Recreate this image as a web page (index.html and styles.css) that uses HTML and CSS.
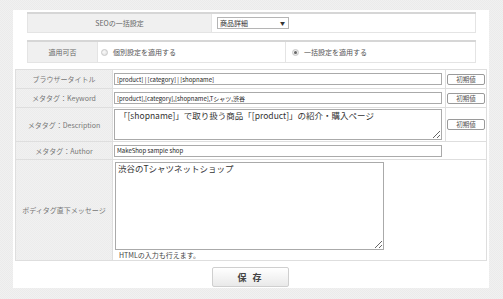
FILE: index.html
```html
<!DOCTYPE html>
<html lang="ja">
<head>
  <meta charset="UTF-8" />
  <title>SEO設定</title>
  <link rel="stylesheet" href="styles.css">
</head>
<body>
  <div class="page">
    <div class="panel">
      <div class="box box-seo">
        <div class="box-label">SEOの一括設定</div>
        <div class="box-cell">
          <span class="select">商品詳細</span>
        </div>
      </div>

      <div class="box box-apply">
        <div class="box-label">適用可否</div>
        <div class="box-cell">
          <span class="radio"></span>個別設定を適用する
        </div>
        <div class="box-cell box-cell-last">
          <span class="radio radio-on"></span>一括設定を適用する
        </div>
      </div>

      <div class="form">
        <div class="label">ブラウザータイトル</div>
        <div class="value"><input class="text" type="text" value="[product] | [category] | [shopname]"></div>
        <div class="reset"><button class="btn-reset">初期値</button></div>

        <div class="label">メタタグ：Keyword</div>
        <div class="value"><input class="text" type="text" value="[product],[category],[shopname],Tシャツ,渋谷"></div>
        <div class="reset"><button class="btn-reset">初期値</button></div>

        <div class="label">メタタグ：Description</div>
        <div class="value"><textarea class="area area-desc">「[shopname]」で取り扱う商品「[product]」の紹介・購入ページ</textarea></div>
        <div class="reset"><button class="btn-reset">初期値</button></div>

        <div class="label">メタタグ：Author</div>
        <div class="value value-wide"><input class="text" type="text" value="MakeShop sample shop"></div>

        <div class="label">ボディタグ直下メッセージ</div>
        <div class="value value-wide value-body">
          <textarea class="area area-body">渋谷のTシャツネットショップ</textarea>
          <p class="note">HTMLの入力も行えます。</p>
        </div>
      </div>

      <div class="actions">
        <button class="btn-save">保 存</button>
      </div>
    </div>
  </div>
</body>
</html>
```

FILE: styles.css
```css
body {
  margin: 0;
  background-color: #eeeeee;
  background-image: repeating-conic-gradient(#f1f1f1 0 25%, #ebebeb 0 50%);
  background-size: 2px 2px;
  font-family: "Noto Sans CJK JP", sans-serif;
  font-size: 7px;
  color: #555;
}
.page {
  padding: 10px 14px 11px 13px;
}
.panel {
  background: #fff;
  width: 476px;
  height: 278px;
  box-sizing: border-box;
  padding: 2px 2px 0;
}

/* top boxes */
.box {
  display: grid;
  margin: 0 11px 0 12px;
  background: #e4e4e4;
  border-top: 2px solid #d6d6d6;
  padding: 0 1px 1px;
  gap: 1px;
}
.box-seo {
  grid-template-columns: 183px 1fr;
  height: 21px;
  box-sizing: border-box;
}
.box-apply {
  grid-template-columns: 69px 187px 1fr;
  height: 23px;
  box-sizing: border-box;
  margin-top: 7px;
}
.box-label {
  display: flex;
  align-items: center;
  justify-content: center;
  background: #f0f0f0;
  color: #666;
}
.box-cell {
  display: flex;
  align-items: center;
  background: #fff;
  padding-left: 3px;
  color: #555;
}
.box-seo .box-cell {
  padding-left: 5px;
}
.box-cell-last {
  padding-left: 6px;
}
.select {
  position: relative;
  display: block;
  width: 72px;
  height: 12px;
  box-sizing: border-box;
  border: 1px solid #b5b5b5;
  padding-left: 2px;
  line-height: 10px;
  color: #333;
}
.select::after {
  content: "▼";
  position: absolute;
  right: 3px;
  top: 0;
  font-size: 5px;
  line-height: 10px;
  color: #333;
}
.radio {
  display: inline-block;
  width: 7px;
  height: 7px;
  border-radius: 50%;
  border: 1px solid #c8c8c8;
  background: radial-gradient(circle at 40% 40%, #fafafa, #dcdcdc);
  margin-right: 5px;
  box-sizing: border-box;
  position: relative;
}
.radio-on::after {
  content: "";
  position: absolute;
  left: 1px;
  top: 1px;
  width: 3px;
  height: 3px;
  border-radius: 50%;
  background: #666;
}

/* main form */
.form {
  display: grid;
  grid-template-columns: 96px 332px 40px;
  grid-template-rows: 18px 18px 33px 17px 100px;
  gap: 1px;
  padding: 1px;
  background: #dedede;
  margin-top: 6px;
}
.label {
  display: flex;
  align-items: center;
  justify-content: center;
  background-color: #efefef;
  background-image: repeating-conic-gradient(#f1f1f1 0 25%, #ececec 0 50%);
  background-size: 2px 2px;
  color: #777;
}
.value {
  display: flex;
  align-items: center;
  background: #fff;
  padding-left: 1px;
}
.value-wide {
  grid-column: span 2;
}
.value-body {
  flex-direction: column;
  align-items: flex-start;
  justify-content: flex-start;
  padding-left: 2px;
}
.reset {
  display: flex;
  align-items: center;
  background: #fff;
  padding-left: 1px;
}
.text {
  width: 328px;
  height: 12px;
  box-sizing: border-box;
  border: 1px solid #aaa;
  padding: 0 2px;
  margin: 0;
  font-family: "Noto Sans CJK JP", sans-serif;
  font-size: 6px;
  color: #222;
  outline: none;
}
.area {
  box-sizing: border-box;
  border: 1px solid #aaa;
  margin: 0;
  padding: 0 4px;
  font-family: "Noto Sans CJK JP", sans-serif;
  font-size: 8.5px;
  line-height: 11px;
  color: #333;
  outline: none;
}
.area-desc {
  width: 328px;
  height: 31px;
}
.area-body {
  width: 269px;
  height: 88px;
  margin-top: 2px;
  padding-left: 2px;
}
.note {
  margin: 1px 0 0 4px;
  font-size: 7px;
  line-height: 9px;
  color: #444;
}
.btn-reset {
  width: 38px;
  height: 11px;
  padding: 0;
  border: 1px solid #9a9a9a;
  border-radius: 2px;
  background: #fff;
  font-family: "Noto Sans CJK JP", sans-serif;
  font-size: 6.5px;
  line-height: 9px;
  color: #555;
}

/* save */
.actions {
  display: flex;
  justify-content: center;
  padding-top: 6px;
  margin-left: -1px;
}
.btn-save {
  width: 77px;
  height: 20px;
  border: 1px solid #cfcfcf;
  border-radius: 2px;
  background: linear-gradient(#ffffff, #e9e9e9);
  font-family: "Noto Sans CJK JP", sans-serif;
  font-size: 9px;
  font-weight: bold;
  letter-spacing: 2px;
  color: #444;
}
```
